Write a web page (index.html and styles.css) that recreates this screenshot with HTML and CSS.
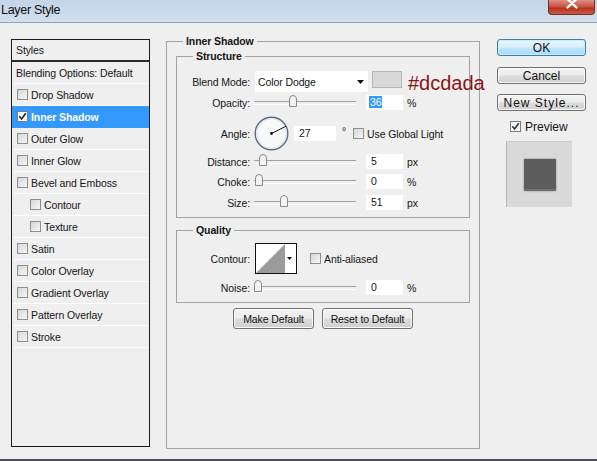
FILE: index.html
```html
<!DOCTYPE html>
<html>
<head>
<meta charset="utf-8">
<title>Layer Style</title>
<link rel="stylesheet" href="styles.css">
</head>
<body>
<div class="window">
  <div class="titlebar">
    <span class="title">Layer Style</span>
    <div class="close">
      <svg width="45" height="14" viewBox="0 0 45 14"><path d="M18.5 -1 L27.5 7.5 M27.5 -1 L18.5 7.5" stroke="#fff" stroke-width="2.4" stroke-linecap="round"/></svg>
    </div>
  </div>
  <div class="dialog">
    <div class="styles-list">
      <div class="list-head">Styles</div>
      <div class="row plain">Blending Options: Default</div>
      <div class="row"><span class="cb"></span>Drop Shadow</div>
      <div class="row selected"><span class="cb on"><svg width="9" height="9" viewBox="0 0 9 9"><path d="M1.3 4.3 L3.6 7 L7.8 1.2" fill="none" stroke="#1d2736" stroke-width="1.7"/></svg></span>Inner Shadow</div>
      <div class="row"><span class="cb"></span>Outer Glow</div>
      <div class="row"><span class="cb"></span>Inner Glow</div>
      <div class="row"><span class="cb"></span>Bevel and Emboss</div>
      <div class="row sub"><span class="cb"></span>Contour</div>
      <div class="row sub"><span class="cb"></span>Texture</div>
      <div class="row"><span class="cb"></span>Satin</div>
      <div class="row"><span class="cb"></span>Color Overlay</div>
      <div class="row"><span class="cb"></span>Gradient Overlay</div>
      <div class="row"><span class="cb"></span>Pattern Overlay</div>
      <div class="row"><span class="cb"></span>Stroke</div>
    </div>

    <fieldset class="group main">
      <legend>Inner Shadow</legend>
      <fieldset class="group structure">
        <legend>Structure</legend>
        <div class="frow blend">
          <span class="lbl">Blend Mode:</span>
          <div class="select"><span>Color Dodge</span><svg width="7" height="4" viewBox="0 0 7 4"><path d="M0 0H7L3.5 4Z" fill="#111"/></svg></div>
          <span class="swatch"></span>
          <span class="note">#dcdada</span>
        </div>
        <div class="frow r-opacity">
          <span class="lbl">Opacity:</span>
          <div class="slider"><span class="thumb" style="left:35px"><svg width="8" height="12" viewBox="0 0 8 12"><path d="M0.5 11.5 V4 Q0.5 0.5 4 0.5 Q7.5 0.5 7.5 4 V11.5 Z" fill="#f2f2f2" stroke="#8a8a8a"/></svg></span></div>
          <span class="num"><span class="hl">36</span></span>
          <span class="unit">%</span>
        </div>
        <div class="frow angle">
          <span class="lbl">Angle:</span>
          <svg class="dial" width="35" height="35" viewBox="0 0 35 35">
            <circle cx="17.5" cy="17.5" r="16.3" fill="#f7f8f9" stroke="#5b6c80" stroke-width="1.4"/>
            <circle cx="17.5" cy="17.5" r="14.8" fill="none" stroke="#dfe4ea" stroke-width="1"/>
            <line x1="17.5" y1="17.5" x2="32" y2="10.2" stroke="#111" stroke-width="1"/>
            <circle cx="17.5" cy="17.5" r="1.4" fill="#111"/>
          </svg>
          <span class="num wide">27</span>
          <span class="deg">°</span>
          <span class="chk"><span class="cb"></span>Use Global Light</span>
        </div>
        <div class="frow r-distance">
          <span class="lbl">Distance:</span>
          <div class="slider"><span class="thumb" style="left:5px"><svg width="8" height="12" viewBox="0 0 8 12"><path d="M0.5 11.5 V4 Q0.5 0.5 4 0.5 Q7.5 0.5 7.5 4 V11.5 Z" fill="#f2f2f2" stroke="#8a8a8a"/></svg></span></div>
          <span class="num">5</span>
          <span class="unit">px</span>
        </div>
        <div class="frow r-choke">
          <span class="lbl">Choke:</span>
          <div class="slider"><span class="thumb" style="left:1px"><svg width="8" height="12" viewBox="0 0 8 12"><path d="M0.5 11.5 V4 Q0.5 0.5 4 0.5 Q7.5 0.5 7.5 4 V11.5 Z" fill="#f2f2f2" stroke="#8a8a8a"/></svg></span></div>
          <span class="num">0</span>
          <span class="unit">%</span>
        </div>
        <div class="frow r-size">
          <span class="lbl">Size:</span>
          <div class="slider"><span class="thumb" style="left:26px"><svg width="8" height="12" viewBox="0 0 8 12"><path d="M0.5 11.5 V4 Q0.5 0.5 4 0.5 Q7.5 0.5 7.5 4 V11.5 Z" fill="#f2f2f2" stroke="#8a8a8a"/></svg></span></div>
          <span class="num">51</span>
          <span class="unit">px</span>
        </div>
      </fieldset>

      <fieldset class="group quality">
        <legend>Quality</legend>
        <div class="frow contour-row">
          <span class="lbl">Contour:</span>
          <svg class="contour" width="42" height="31" viewBox="0 0 42 31">
            <rect x="0.5" y="0.5" width="41" height="30" fill="#fff" stroke="#111"/>
            <path d="M1 30 L30 1 L30 30 Z" fill="#9b9b9b"/>
            <path d="M32 14 H37 L34.5 17 Z" fill="#111"/>
          </svg>
          <span class="chk aa"><span class="cb"></span>Anti-aliased</span>
        </div>
        <div class="frow r-noise">
          <span class="lbl">Noise:</span>
          <div class="slider"><span class="thumb" style="left:0px"><svg width="8" height="12" viewBox="0 0 8 12"><path d="M0.5 11.5 V4 Q0.5 0.5 4 0.5 Q7.5 0.5 7.5 4 V11.5 Z" fill="#f2f2f2" stroke="#8a8a8a"/></svg></span></div>
          <span class="num">0</span>
          <span class="unit">%</span>
        </div>
      </fieldset>

      <div class="btnrow">
        <button class="btn make">Make Default</button>
        <button class="btn reset">Reset to Default</button>
      </div>
    </fieldset>

    <div class="side">
      <button class="btn sbtn ok">OK</button>
      <button class="btn sbtn cancel">Cancel</button>
      <button class="btn sbtn newstyle">New Style...</button>
      <div class="preview-row"><span class="cb on"><svg width="9" height="9" viewBox="0 0 9 9"><path d="M1.3 4.3 L3.6 7 L7.8 1.2" fill="none" stroke="#2a3550" stroke-width="1.7"/></svg></span>Preview</div>
      <div class="preview-box"><div class="preview-inner"></div></div>
    </div>
  </div>
  <div class="bottom-edge"></div>
</div>
</body>
</html>
```

FILE: styles.css
```css
* { box-sizing: border-box; }
html, body { margin: 0; padding: 0; }
body {
  width: 597px;
  height: 461px;
  overflow: hidden;
  background: #efefef;
  font-family: "Liberation Sans", Arial, sans-serif;
  font-size: 10.5px;
  letter-spacing: -0.1px;
  color: #151515;
}
.window {
  width: 597px;
  height: 461px;
  display: flex;
  flex-direction: column;
  background: #efefef;
}

/* title bar */
.titlebar {
  height: 23px;
  flex: none;
  display: flex;
  justify-content: space-between;
  align-items: flex-start;
  background: linear-gradient(#c3d4e8, #d2dfee);
  border-bottom: 1px solid #8fa2b8;
  padding-right: 2px;
}
.title {
  font-size: 12.5px;
  line-height: 20px;
  padding-left: 1px;
  color: #0c0c0c;
  letter-spacing: -0.3px;
}
.close {
  width: 47px;
  height: 15px;
  border: 1px solid #6e2f2a;
  border-top: none;
  border-radius: 0 0 4px 4px;
  background: linear-gradient(#de9187, #c95642 45%, #b7321f 60%, #c85a45);
}
.close svg { display: block; }

/* dialog layout */
.dialog {
  flex: 1;
  display: flex;
  align-items: flex-start;
  padding-left: 11px;
}

/* left styles list */
.styles-list {
  flex: none;
  width: 139px;
  height: 408px;
  margin-top: 16px;
  border: 1px solid #1c1c1c;
  padding: 0 2px;
}
.list-head {
  height: 22px;
  margin: 0 -2px;
  padding-left: 4px;
  border-bottom: 2px solid #2a2a2a;
  display: flex;
  align-items: center;
}
.row {
  height: 22px;
  border-bottom: 1px solid #ffffff;
  display: flex;
  align-items: center;
  gap: 3px;
  padding-left: 3px;
  white-space: nowrap;
}
.row.plain { padding-left: 2px; }
.row.sub { padding-left: 16px; }
.row.selected {
  margin: 0 -2px;
  padding-left: 5px;
  background: #3399ff;
  border-bottom-color: #3399ff;
  color: #fff;
  font-weight: bold;
}
.cb {
  flex: none;
  width: 11px;
  height: 11px;
  border: 1px solid #8d8d8d;
  background: linear-gradient(135deg, #d6d6d6, #f6f6f6);
  display: flex;
  align-items: center;
  justify-content: center;
}
.cb.on { background: #fbfbfb; border-color: #7b7b7b; }
.cb svg { display: block; }

/* group boxes */
.group {
  margin: 0;
  padding: 0;
  min-width: 0;
  border: 1px solid #a3a3a3;
}
.group legend {
  font-weight: bold;
  line-height: 12px;
  padding: 0 3px;
  margin-left: 16px;
}
.main {
  flex: none;
  width: 314px;
  height: 414px;
  margin: 12px 0 0 16px;
}
.structure {
  margin: 3px 9px 0 9px;
  padding-bottom: 7px;
}
.quality {
  margin: 6px 9px 0 9px;
  padding-bottom: 7px;
}

/* form rows */
.frow {
  display: flex;
  align-items: center;
  height: 15px;
  white-space: nowrap;
}
.lbl {
  flex: none;
  width: 73px;
  text-align: right;
}
.blend { height: 21px; margin-top: 9px; }
.r-opacity { margin-top: 3px; }
.angle { height: 35px; margin-top: 6px; }
.r-distance { margin-top: 3px; }
.r-choke { margin-top: 5px; }
.r-size { margin-top: 6px; }
.contour-row { height: 31px; margin-top: 7px; }
.r-noise { margin-top: 6px; }

.select {
  flex: none;
  width: 113px;
  height: 21px;
  margin-left: 5px;
  background: #fff;
  display: flex;
  align-items: center;
  justify-content: space-between;
  padding: 0 4px 0 3px;
}
.select svg { display: block; }
.swatch {
  flex: none;
  align-self: flex-start;
  width: 30px;
  height: 17px;
  margin-left: 4px;
  background: #d8d8d8;
  border: 1px solid #b8b8b8;
}
.note {
  align-self: flex-start;
  margin: 2px 0 0 6px;
  font-size: 20px;
  line-height: 20px;
  letter-spacing: 0;
  color: #8c1515;
}

.slider {
  flex: none;
  position: relative;
  width: 102px;
  height: 15px;
  margin-left: 4px;
}
.slider::before {
  content: "";
  position: absolute;
  left: 0;
  right: 0;
  top: 6px;
  height: 2px;
  border-top: 1px solid #a2a2a2;
  border-bottom: 1px solid #ffffff;
}
.thumb {
  position: absolute;
  top: 0;
  width: 8px;
  height: 12px;
}
.thumb svg { display: block; }

.num {
  flex: none;
  width: 37px;
  height: 15px;
  margin-left: 10px;
  padding-left: 5px;
  line-height: 15px;
  background: #fff;
}
.num.wide { width: 42px; margin-left: 5px; }
.hl {
  display: inline-block;
  margin-left: -2px;
  padding: 0 1px;
  line-height: 12px;
  background: #3399ff;
  color: #fff;
}
.unit { margin-left: 4px; }
.dial { flex: none; display: block; margin-left: 4px; }
.deg { margin-left: 6px; margin-top: -6px; }
.chk {
  display: flex;
  align-items: center;
  gap: 3px;
  margin-left: 7px;
}
.contour { flex: none; display: block; margin-left: 5px; }
.chk.aa { margin-left: 13px; }

/* buttons */
.btn {
  font-family: inherit;
  font-size: 10.5px;
  letter-spacing: -0.1px;
  color: #111;
  border: 1px solid #707070;
  border-radius: 3px;
  background: linear-gradient(#f3f3f3, #ebebeb 48%, #dddddd 52%, #cfcfcf);
  box-shadow: inset 0 0 0 1px #fbfbfb;
  padding: 0;
  display: flex;
  align-items: center;
  justify-content: center;
}
.btnrow {
  display: flex;
  justify-content: center;
  gap: 8px;
  margin-top: 5px;
}
.btn.make { width: 81px; height: 21px; }
.btn.reset { width: 91px; height: 21px; }

.side {
  flex: none;
  width: 89px;
  margin: 16px 0 0 17px;
  display: flex;
  flex-direction: column;
}
.sbtn {
  height: 17px;
  font-size: 12px;
  letter-spacing: 0;
}
.ok {
  border-color: #3c7fb1;
  background: linear-gradient(#eaf6fd, #d9f0fc 48%, #bee6fd 52%, #a7d9f5);
  box-shadow: inset 0 0 0 1px #c4ecfc;
}
.cancel { margin-top: 11px; }
.newstyle { margin-top: 10px; letter-spacing: 1px; }
.preview-row {
  margin-top: 10px;
  height: 11px;
  display: flex;
  align-items: center;
  gap: 4px;
  padding-left: 13px;
  font-size: 12px;
  letter-spacing: 0;
}
.preview-box {
  margin: 9px 0 0 9px;
  width: 66px;
  height: 66px;
  background: #d9d9d9;
  border-left: 1px solid #b9b9b9;
  border-top: 1px solid #cdcdcd;
  display: flex;
  align-items: center;
  justify-content: center;
}
.preview-inner {
  width: 32px;
  height: 32px;
  background: #5d5d5d;
  box-shadow: 0 0 2px rgba(0,0,0,0.35), inset 0 -2px 1px #707070;
}

.bottom-edge {
  flex: none;
  height: 2px;
  background: #4b4f55;
}
```
